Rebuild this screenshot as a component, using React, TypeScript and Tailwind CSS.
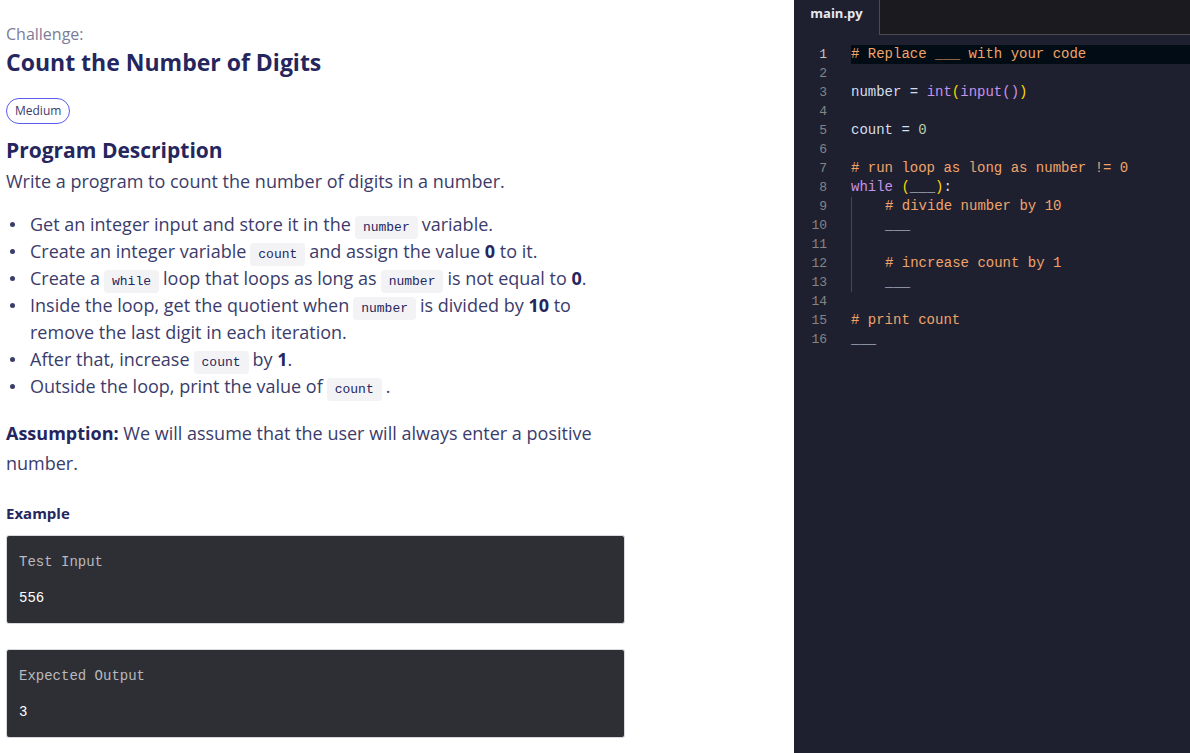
import type { ReactNode } from "react"

const sans = { fontFamily: "'Open Sans', 'Noto Sans', sans-serif" }

function Code({ children }: { children: ReactNode }) {
  return (
    <code className="mx-[4px] rounded bg-[#f3f3f5] px-[8px] py-[4px] font-['Liberation_Mono',monospace] text-[13px] leading-none text-[#25265e]">
      {children}
    </code>
  )
}

type Tok = [string, string]

const C = "text-[#f0a46a]"
const W = "text-[#d6deeb]"
const P = "text-[#c792ea]"
const Y = "text-[#ffd700]"
const G = "text-[#b5cea8]"

const lines: { toks: Tok[]; indent?: boolean; guide?: boolean }[] = [
  { toks: [[C, "# Replace ___ with your code"]] },
  { toks: [] },
  { toks: [[W, "number = "], [P, "int"], [Y, "("], [P, "input()"], [Y, ")"]] },
  { toks: [] },
  { toks: [[W, "count = "], [G, "0"]] },
  { toks: [] },
  { toks: [[C, "# run loop as long as number != 0"]] },
  { toks: [[P, "while "], [Y, "("], [W, "___"], [Y, ")"], [W, ":"]] },
  { toks: [[C, "# divide number by 10"]], indent: true, guide: true },
  { toks: [[W, "___"]], indent: true, guide: true },
  { toks: [], guide: true },
  { toks: [[C, "# increase count by 1"]], indent: true, guide: true },
  { toks: [[W, "___"]], indent: true, guide: true },
  { toks: [] },
  { toks: [[C, "# print count"]] },
  { toks: [[W, "___"]] },
]

function Editor() {
  return (
    <div className="flex h-full w-[396px] shrink-0 flex-col bg-[#1e2030]">
      <div className="flex h-[35px] shrink-0">
        <div className="w-[85px] bg-[#1e2030] pt-[4px] text-center text-[13px] font-bold text-[#e8e8ef]" style={sans}>
          main.py
        </div>
        <div className="flex-1 border-b border-l border-[#4a4a50] bg-[#1b1b1f]" />
      </div>
      <div className="pt-[10px] font-['Liberation_Mono',monospace] text-[14px] leading-[19px]">
        {lines.map((l, i) => (
          <div key={i} className="flex h-[19px]">
            <div className={`w-[33px] text-right ${i === 0 ? "text-[#c6c6c6]" : "text-[#858585]"} text-[13px]`}>{i + 1}</div>
            <div className={`ml-[24px] flex flex-1 whitespace-pre ${i === 0 ? "bg-[#020c14]" : ""}`}>
              <div className={`relative flex ${l.indent ? "pl-[34px]" : ""}`}>
                {l.guide && <span className="absolute left-0 top-0 h-[19px] w-px bg-[#44475a]" />}
                {l.toks.map((t, j) => (
                  <span key={j} className={t[0]}>
                    {t[1]}
                  </span>
                ))}
              </div>
            </div>
          </div>
        ))}
      </div>
    </div>
  )
}

function Box({ label, value }: { label: string; value: string }) {
  return (
    <div className="h-[89px] w-[619px] rounded-[3px] border border-[#d8d8de] bg-[#2e2f35] px-[12px] pt-[18px] font-['Liberation_Mono',monospace] text-[14px]">
      <div className="leading-[17px] text-[#b9b9be]">{label}</div>
      <div className="mt-[19px] leading-[17px] text-white">{value}</div>
    </div>
  )
}

export default function App() {
  return (
    <div className="flex h-[753px] w-[1190px] overflow-hidden bg-white" style={sans}>
      <div className="flex-1 pl-[6px] pt-[24px] text-[#3b3c6b]">
        <div className="text-[16px] leading-[20px] text-[#7b7c99]">Challenge:</div>
        <h1 className="mt-[3px] text-[23px] font-bold leading-[30px] text-[#25265e]">Count the Number of Digits</h1>
        <div className="mt-[21px] inline-flex h-[26px] items-center rounded-full border border-[#5a5cf0] px-[8px] text-[12px] text-[#3b3c6b]">
          Medium
        </div>
        <h2 className="mt-[12px] text-[21px] font-bold leading-[28px] text-[#25265e]">Program Description</h2>
        <p className="mt-[5px] text-[18px] leading-[24px]">Write a program to count the number of digits in a number.</p>
        <ul className="mt-[18px] pl-[24px] text-[18px] leading-[27px]">
          {[
            <>Get an integer input and store it in the<Code>number</Code>variable.</>,
            <>Create an integer variable<Code>count</Code>and assign the value <b className="text-[#25265e]">0</b> to it.</>,
            <>Create a<Code>while</Code>loop that loops as long as<Code>number</Code>is not equal to <b className="text-[#25265e]">0</b>.</>,
            <>Inside the loop, get the quotient when<Code>number</Code>is divided by <b className="text-[#25265e]">10</b> to<br />remove the last digit in each iteration.</>,
            <>After that, increase<Code>count</Code>by <b className="text-[#25265e]">1</b>.</>,
            <>Outside the loop, print the value of<Code>count</Code>.</>,
          ].map((c, i) => (
            <li key={i} className="relative">
              <span className="absolute left-[-20px] top-[11px] h-[5px] w-[5px] rounded-full bg-[#3b3c6b]" />
              {c}
            </li>
          ))}
        </ul>
        <p className="mt-[18px] text-[18px] leading-[30px]">
          <b className="text-[#25265e]">Assumption:</b> We will assume that the user will always enter a positive
          <br />
          number.
        </p>
        <div className="mt-[25px] text-[15px] font-bold leading-[20px] text-[#25265e]">Example</div>
        <div className="mt-[12px]">
          <Box label="Test Input" value="556" />
        </div>
        <div className="mt-[25px]">
          <Box label="Expected Output" value="3" />
        </div>
      </div>
      <Editor />
    </div>
  )
}
